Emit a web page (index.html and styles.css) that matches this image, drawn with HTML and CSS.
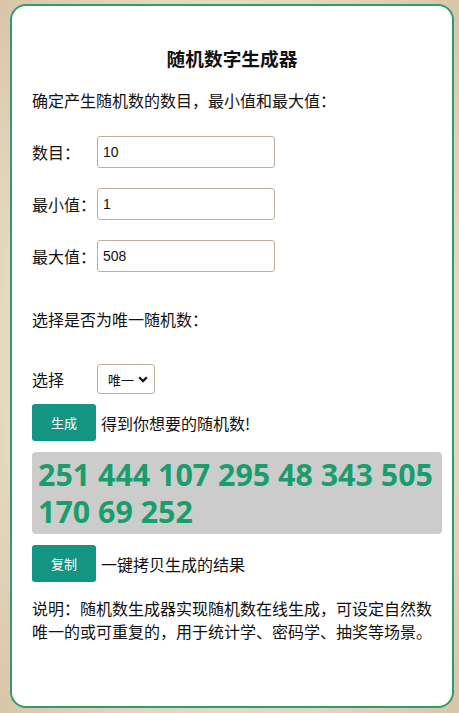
FILE: index.html
```html
<!DOCTYPE html>
<html lang="zh-CN">
<head>
  <meta charset="UTF-8" />
  <meta name="viewport" content="width=device-width, initial-scale=1.0"/>
  <title>随机数字生成器</title>
  <link rel="stylesheet" href="styles.css">
</head>
<body>

<div class="card">
  <h3 class="title">随机数字生成器</h3>
  <p class="intro">确定产生随机数的数目，最小值和最大值：</p>

  <div class="row">
    <label class="label" for="count">数目：</label>
    <input class="field" type="text" id="count" value="10">
  </div>
  <div class="row">
    <label class="label" for="min">最小值：</label>
    <input class="field" type="text" id="min" value="1">
  </div>
  <div class="row">
    <label class="label" for="max">最大值：</label>
    <input class="field" type="text" id="max" value="508">
  </div>

  <p class="intro intro-unique">选择是否为唯一随机数：</p>

  <div class="row row-select">
    <label class="label" for="unique">选择</label>
    <div class="select-wrap">
      <select id="unique" class="picker">
        <option value="1">唯一</option>
        <option value="0">可重复</option>
      </select>
      <svg class="chevron" width="10" height="7" viewBox="0 0 10 7"><path d="M1.2 1.3 L5 5.1 L8.8 1.3" fill="none" stroke="#111" stroke-width="2.2"/></svg>
    </div>
  </div>

  <div class="action">
    <button class="btn" id="gen">生成</button>
    <span class="hint">得到你想要的随机数!</span>
  </div>

  <div class="result" id="result">251 444 107 295 48 343 505 170 69 252</div>

  <div class="action">
    <button class="btn" id="copy">复制</button>
    <span class="hint">一键拷贝生成的结果</span>
  </div>

  <p class="note">说明：随机数生成器实现随机数在线生成，可设定自然数唯一的或可重复的，用于统计学、密码学、抽奖等场景。</p>
</div>

</body>
</html>
```

FILE: styles.css
```css
html, body {
  margin: 0;
  height: 100%;
}
body {
  font-family: "Noto Sans CJK SC", "Noto Sans", sans-serif;
  color: #111;
  background: radial-gradient(ellipse at center, #f3ece0 0%, #e6d8c1 70%, #d8c5a8 100%);
  padding: 4px 5px 5px 10px;
  box-sizing: border-box;
}
.card {
  box-sizing: border-box;
  height: 704px;
  background: white;
  border: 2px solid #2e9e6e;
  border-radius: 16px;
  padding: 40px 20px 0;
}
.title {
  margin: 0;
  font-size: 18.7px;
  line-height: 24px;
  text-align: center;
  font-weight: bold;
}
.intro {
  margin: 18px 0 24px;
  font-size: 16px;
  line-height: 24px;
}
.intro-unique {
  margin: 35px 0 33px;
}
.row {
  display: flex;
  align-items: center;
  height: 32px;
  margin-bottom: 20px;
}
.label {
  width: 65px;
  font-size: 16px;
}
.field {
  box-sizing: border-box;
  width: 178px;
  height: 32px;
  border: 1px solid #bcafa2;
  border-radius: 3px;
  padding: 0 5px;
  font-family: "Liberation Sans", Arial, sans-serif;
  font-size: 14px;
  color: #111;
}
.row-select {
  height: 30px;
  margin-bottom: 10px;
}
.select-wrap {
  position: relative;
  width: 58px;
  height: 30px;
}
.picker {
  appearance: none;
  -webkit-appearance: none;
  box-sizing: border-box;
  width: 58px;
  height: 30px;
  border: 1px solid #bcafa2;
  border-radius: 3px;
  background: white;
  padding: 0 0 0 10px;
  font-family: "Noto Sans CJK SC", sans-serif;
  font-size: 13px;
  color: #111;
}
.chevron {
  position: absolute;
  right: 7px;
  top: 12px;
  pointer-events: none;
}
.action {
  display: flex;
  align-items: center;
}
.btn {
  width: 64px;
  height: 37px;
  border: none;
  border-radius: 3px;
  background-color: #129583;
  color: white;
  font-family: "Noto Sans CJK SC", sans-serif;
  font-size: 13px;
  cursor: pointer;
  margin-right: 5px;
}
.hint {
  font-size: 16px;
}
.result {
  margin: 11px -10px 11px 0;
  background: #cccccc;
  border-radius: 4px;
  padding: 4px 6px;
  font-family: "Open Sans", "Noto Sans", sans-serif;
  font-weight: bold;
  font-size: 30.4px;
  line-height: 37px;
  color: #1a9d6c;
}
.note {
  margin: 15px 0 0;
  font-size: 16px;
  line-height: 23px;
}
```
